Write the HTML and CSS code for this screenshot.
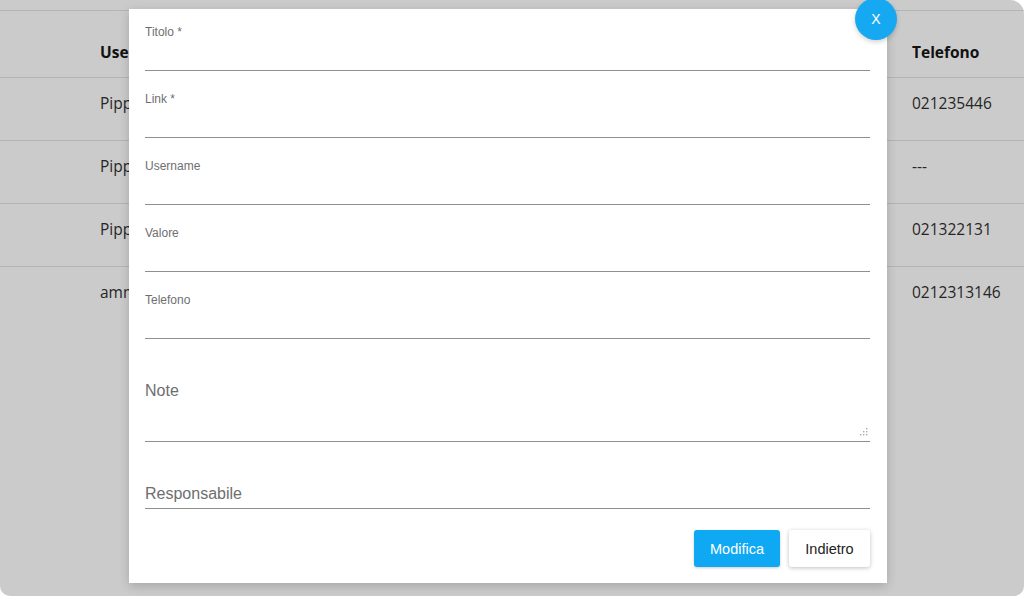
FILE: index.html
```html
<!DOCTYPE html>
<html lang="it">
<head>
<meta charset="utf-8">
<title>Modifica</title>
<link rel="stylesheet" href="styles.css">
</head>
<body>
<div class="page">
  <div class="table">
    <div class="row head">
      <div class="cell">User</div>
      <div class="cell">Telefono</div>
    </div>
    <div class="row">
      <div class="cell">Pippo</div>
      <div class="cell">021235446</div>
    </div>
    <div class="row">
      <div class="cell">Pippo</div>
      <div class="cell">---</div>
    </div>
    <div class="row">
      <div class="cell">Pippo</div>
      <div class="cell">021322131</div>
    </div>
    <div class="row last">
      <div class="cell">amm</div>
      <div class="cell">0212313146</div>
    </div>
  </div>

  <div class="modal">
    <button class="close">X</button>
    <div class="field first">
      <label class="small-label">Titolo *</label>
      <div class="input"></div>
    </div>
    <div class="field">
      <label class="small-label">Link *</label>
      <div class="input"></div>
    </div>
    <div class="field">
      <label class="small-label">Username</label>
      <div class="input"></div>
    </div>
    <div class="field">
      <label class="small-label">Valore</label>
      <div class="input"></div>
    </div>
    <div class="field">
      <label class="small-label">Telefono</label>
      <div class="input"></div>
    </div>
    <div class="field big note">
      <label class="big-label">Note</label>
      <div class="textarea">
        <svg class="grip" width="8" height="8" viewBox="0 0 8 8">
          <rect x="6" y="0" width="1.4" height="1.4" fill="#aaa"/>
          <rect x="3" y="3" width="1.4" height="1.4" fill="#aaa"/>
          <rect x="6" y="3" width="1.4" height="1.4" fill="#aaa"/>
          <rect x="0" y="6" width="1.4" height="1.4" fill="#aaa"/>
          <rect x="3" y="6" width="1.4" height="1.4" fill="#aaa"/>
          <rect x="6" y="6" width="1.4" height="1.4" fill="#aaa"/>
        </svg>
      </div>
    </div>
    <div class="field big resp">
      <label class="big-label">Responsabile</label>
    </div>
    <div class="actions">
      <button class="btn primary">Modifica</button>
      <button class="btn secondary">Indietro</button>
    </div>
  </div>
</div>
</body>
</html>
```

FILE: styles.css
```css
html, body {
  margin: 0;
  padding: 0;
  background: #ffffff;
}

.page {
  position: relative;
  width: 1024px;
  height: 596px;
  background: #cbcbcb;
  border-radius: 0 14px 10px 10px;
  overflow: hidden;
  box-sizing: border-box;
  padding-top: 10px;
  font-family: "Open Sans", "Liberation Sans", sans-serif;
}

.table {
  border-top: 1px solid #b4b4b4;
}

.row {
  display: grid;
  grid-template-columns: 1fr 112px;
  padding-left: 100px;
  height: 63px;
  border-bottom: 1px solid #b4b4b4;
  box-sizing: border-box;
  align-items: start;
}

.row.head {
  height: 67px;
}

.row.last {
  border-bottom: none;
}

.cell {
  font-size: 15.5px;
  line-height: 22px;
  color: #262626;
  padding-top: 14px;
  white-space: nowrap;
}

.row.head .cell {
  font-weight: 700;
  color: #111;
  padding-top: 30px;
}

.modal {
  position: absolute;
  left: 129px;
  top: 9px;
  width: 758px;
  height: 574px;
  box-sizing: border-box;
  background: #ffffff;
  padding: 0 17px 16px 16px;
  box-shadow: 0 3px 10px rgba(0, 0, 0, 0.18);
  font-family: "Liberation Sans", Arial, sans-serif;
}

.close {
  position: absolute;
  top: -11px;
  right: -10px;
  width: 42px;
  height: 42px;
  border-radius: 50%;
  border: none;
  background: #16a8f1;
  color: #ffffff;
  font-family: "Liberation Sans", Arial, sans-serif;
  font-size: 14px;
  padding: 0;
  box-shadow: 0 2px 5px rgba(0, 0, 0, 0.18);
}

.field {
  display: flex;
  flex-direction: column;
  padding-top: 21px;
  border-bottom: 1px solid #8f8f8f;
}

.field.first {
  padding-top: 16px;
}

.small-label {
  font-size: 12px;
  line-height: 14px;
  color: #6f6f6f;
}

.input {
  height: 31px;
}

.field.big {
  padding-top: 43px;
}

.big-label {
  font-size: 16px;
  line-height: 18px;
  color: #6e6e6e;
}

.textarea {
  height: 41px;
  display: flex;
  justify-content: flex-end;
  align-items: flex-end;
  padding-bottom: 5px;
  padding-right: 2px;
  box-sizing: border-box;
}

.field.resp .big-label {
  padding-bottom: 5px;
}

.actions {
  display: flex;
  justify-content: flex-end;
  gap: 9px;
  margin-top: 21px;
}

.btn {
  height: 37px;
  border: none;
  border-radius: 3px;
  font-family: "Liberation Sans", Arial, sans-serif;
  font-size: 14.5px;
  padding: 0;
}

.btn.primary {
  width: 86px;
  background: #0ea8f3;
  color: #ffffff;
  box-shadow: 0 1px 3px rgba(0, 0, 0, 0.2);
}

.btn.secondary {
  width: 81px;
  background: #ffffff;
  color: #222222;
  box-shadow: 0 1px 4px rgba(0, 0, 0, 0.25);
}
```
